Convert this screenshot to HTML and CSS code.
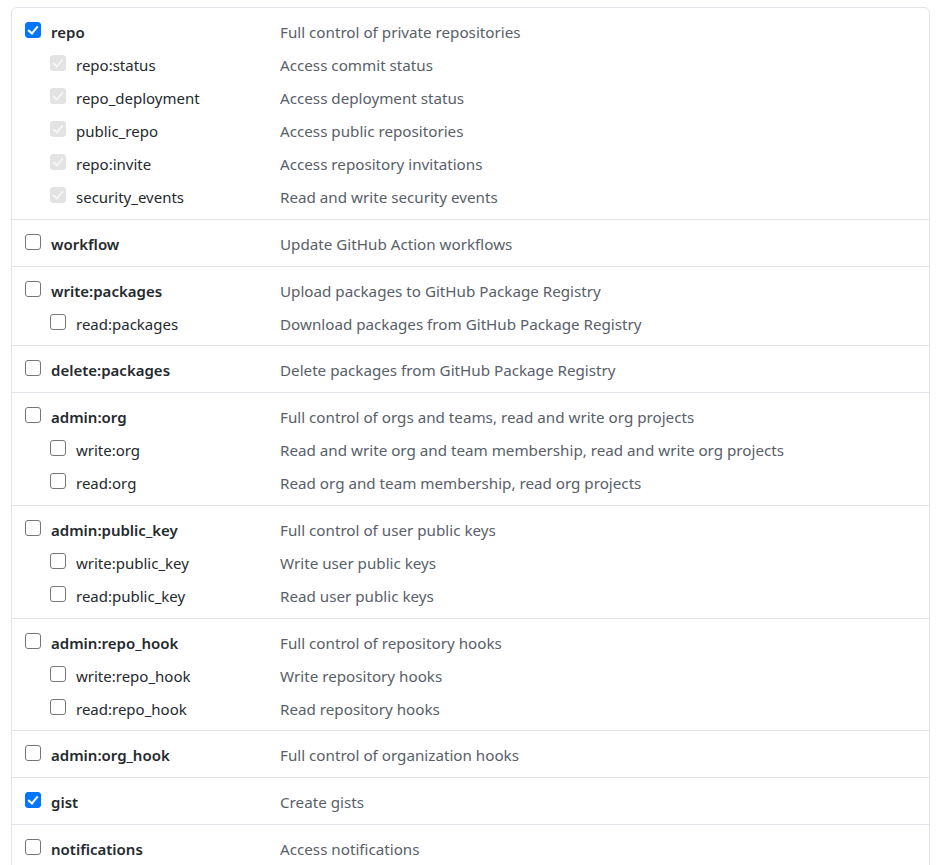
FILE: index.html
```html
<!DOCTYPE html>
<html>
<head>
<meta charset="utf-8">
<link rel="stylesheet" href="styles.css">
</head>
<body>
<div class="scopes">
  <div class="group">
    <div class="row"><span class="scope top"><span class="cb checked"></span>repo</span><span class="desc">Full control of private repositories</span></div>
    <div class="row"><span class="scope sub"><span class="cb disabled"></span>repo:status</span><span class="desc">Access commit status</span></div>
    <div class="row"><span class="scope sub"><span class="cb disabled"></span>repo_deployment</span><span class="desc">Access deployment status</span></div>
    <div class="row"><span class="scope sub"><span class="cb disabled"></span>public_repo</span><span class="desc">Access public repositories</span></div>
    <div class="row"><span class="scope sub"><span class="cb disabled"></span>repo:invite</span><span class="desc">Access repository invitations</span></div>
    <div class="row"><span class="scope sub"><span class="cb disabled"></span>security_events</span><span class="desc">Read and write security events</span></div>
  </div>
  <div class="group">
    <div class="row"><span class="scope top"><span class="cb"></span>workflow</span><span class="desc">Update GitHub Action workflows</span></div>
  </div>
  <div class="group">
    <div class="row"><span class="scope top"><span class="cb"></span>write:packages</span><span class="desc">Upload packages to GitHub Package Registry</span></div>
    <div class="row"><span class="scope sub"><span class="cb"></span>read:packages</span><span class="desc">Download packages from GitHub Package Registry</span></div>
  </div>
  <div class="group">
    <div class="row"><span class="scope top"><span class="cb"></span>delete:packages</span><span class="desc">Delete packages from GitHub Package Registry</span></div>
  </div>
  <div class="group">
    <div class="row"><span class="scope top"><span class="cb"></span>admin:org</span><span class="desc">Full control of orgs and teams, read and write org projects</span></div>
    <div class="row"><span class="scope sub"><span class="cb"></span>write:org</span><span class="desc">Read and write org and team membership, read and write org projects</span></div>
    <div class="row"><span class="scope sub"><span class="cb"></span>read:org</span><span class="desc">Read org and team membership, read org projects</span></div>
  </div>
  <div class="group">
    <div class="row"><span class="scope top"><span class="cb"></span>admin:public_key</span><span class="desc">Full control of user public keys</span></div>
    <div class="row"><span class="scope sub"><span class="cb"></span>write:public_key</span><span class="desc">Write user public keys</span></div>
    <div class="row"><span class="scope sub"><span class="cb"></span>read:public_key</span><span class="desc">Read user public keys</span></div>
  </div>
  <div class="group">
    <div class="row"><span class="scope top"><span class="cb"></span>admin:repo_hook</span><span class="desc">Full control of repository hooks</span></div>
    <div class="row"><span class="scope sub"><span class="cb"></span>write:repo_hook</span><span class="desc">Write repository hooks</span></div>
    <div class="row"><span class="scope sub"><span class="cb"></span>read:repo_hook</span><span class="desc">Read repository hooks</span></div>
  </div>
  <div class="group">
    <div class="row"><span class="scope top"><span class="cb"></span>admin:org_hook</span><span class="desc">Full control of organization hooks</span></div>
  </div>
  <div class="group">
    <div class="row"><span class="scope top"><span class="cb checked"></span>gist</span><span class="desc">Create gists</span></div>
  </div>
  <div class="group">
    <div class="row"><span class="scope top"><span class="cb"></span>notifications</span><span class="desc">Access notifications</span></div>
  </div>
</div>
</body>
</html>
```

FILE: styles.css
```css
html, body {
  margin: 0;
  padding: 0;
  background: #ffffff;
  overflow: hidden;
}
body {
  font-family: "Noto Sans", "Open Sans", sans-serif;
  font-size: 15px;
  color: #24292e;
}
.scopes {
  margin: 7px 14px 0 11px;
  border: 1px solid #e1e4e8;
  border-radius: 6px;
}
.group {
  padding: 8px 0 4.75px;
  border-top: 1px solid #e1e4e8;
}
.group:first-child {
  border-top: none;
}
.row {
  display: grid;
  grid-template-columns: 255px 1fr;
  height: 33px;
  padding-left: 13px;
  align-items: start;
}
.scope {
  display: flex;
  align-items: flex-start;
  line-height: 33px;
  white-space: nowrap;
}
.scope.top {
  font-weight: 600;
}
.scope.sub {
  padding-left: 25px;
}
.desc {
  line-height: 33px;
  font-size: 15.2px;
  color: #586069;
  white-space: nowrap;
}
.cb {
  flex: none;
  box-sizing: border-box;
  width: 16px;
  height: 16px;
  margin: 6px 10px 0 0;
  border: 1px solid #767676;
  border-radius: 3px;
  background: #ffffff;
  position: relative;
}
.cb.checked {
  background: #0075ff;
  border-color: #0075ff;
}
.cb.disabled {
  background: #e3e3e3;
  border-color: #e3e3e3;
}
.cb.checked::after,
.cb.disabled::after {
  content: "";
  position: absolute;
  left: 4px;
  top: 1px;
  width: 4px;
  height: 8px;
  border: solid #ffffff;
  border-width: 0 2.5px 2.5px 0;
  transform: rotate(40deg);
}
.cb.disabled::after {
  border-color: #f5f5f5;
}
```
